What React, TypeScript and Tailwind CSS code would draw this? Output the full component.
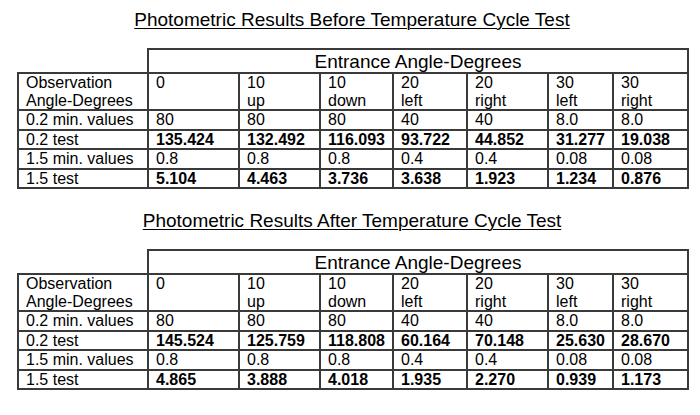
type Result = { label: string; values: string[]; bold?: boolean }

const ANGLES: [string, string][] = [
  ['0', ''],
  ['10', 'up'],
  ['10', 'down'],
  ['20', 'left'],
  ['20', 'right'],
  ['30', 'left'],
  ['30', 'right'],
]

const MINS_02 = ['80', '80', '80', '40', '40', '8.0', '8.0']
const MINS_15 = ['0.8', '0.8', '0.8', '0.4', '0.4', '0.08', '0.08']

const before: Result[] = [
  { label: '0.2 min. values', values: MINS_02 },
  { label: '0.2 test', values: ['135.424', '132.492', '116.093', '93.722', '44.852', '31.277', '19.038'], bold: true },
  { label: '1.5 min. values', values: MINS_15 },
  { label: '1.5 test', values: ['5.104', '4.463', '3.736', '3.638', '1.923', '1.234', '0.876'], bold: true },
]

const after: Result[] = [
  { label: '0.2 min. values', values: MINS_02 },
  { label: '0.2 test', values: ['145.524', '125.759', '118.808', '60.164', '70.148', '25.630', '28.670'], bold: true },
  { label: '1.5 min. values', values: MINS_15 },
  { label: '1.5 test', values: ['4.865', '3.888', '4.018', '1.935', '2.270', '0.939', '1.173'], bold: true },
]

const COL_WIDTHS = ['w-[130px]', 'w-[91px]', 'w-[81px]', 'w-[73px]', 'w-[74px]', 'w-[81px]', 'w-[65px]', 'w-[75px]']

const cell = 'border-2 border-[#3a3a3a] pl-[7px] pr-0 py-0 align-top text-left'

function ResultsTable({ title, rows }: { title: string; rows: Result[] }) {
  return (
    <div>
      <h2 className="text-center text-[19px] leading-[22px] underline underline-offset-[2px] decoration-1">{title}</h2>
      <table className="mt-[17px] border-collapse table-fixed w-[670px] text-[16px] leading-[17.5px]">
        <colgroup>
          {COL_WIDTHS.map((w, i) => <col key={i} className={w} />)}
        </colgroup>
        <thead>
          <tr>
            <th className="border-0 p-0" />
            <th colSpan={7} className="border-2 border-[#3a3a3a] font-normal text-center text-[19px] leading-[20px] p-0 pt-[2px] align-top h-[24px]">
              Entrance Angle-Degrees
            </th>
          </tr>
        </thead>
        <tbody>
          <tr>
            <td className={cell}>Observation<br />Angle-Degrees</td>
            {ANGLES.map(([deg, dir], i) => (
              <td key={i} className={cell}>{deg}<br />{dir || '\u00a0'}</td>
            ))}
          </tr>
          {rows.map(r => (
            <tr key={r.label}>
              <td className={cell}>{r.label}</td>
              {r.values.map((v, i) => (
                <td key={i} className={`${cell} ${r.bold ? 'font-bold' : ''}`}>{v}</td>
              ))}
            </tr>
          ))}
        </tbody>
      </table>
    </div>
  )
}

export default function App() {
  return (
    <div className="w-[700px] h-[415px] bg-white text-black pl-[17px] pt-[9px] font-['Liberation_Sans',Arial,sans-serif]">
      <div className="w-[670px] flex flex-col gap-[21px]">
        <ResultsTable title="Photometric Results Before Temperature Cycle Test" rows={before} />
        <ResultsTable title="Photometric Results After Temperature Cycle Test" rows={after} />
      </div>
    </div>
  )
}
